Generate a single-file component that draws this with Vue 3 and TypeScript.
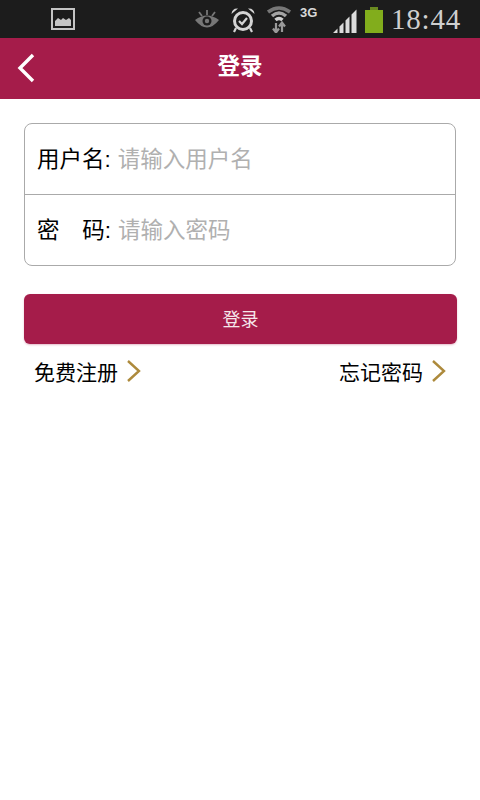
<script setup lang="ts">
</script>

<template>
  <div class="page">
    <div class="status">
      <svg class="pic" width="24" height="22" viewBox="0 0 24 22">
        <rect x="1" y="1" width="22" height="20" fill="none" stroke="#c4c4c4" stroke-width="2"/>
        <path d="M4 18 L4 13 L7 10 L10 12 L12 10 L15 12 L18 10 L20 12 L20 18 Z" fill="#c4c4c4"/>
      </svg>
      <div class="spring"></div>
      <svg class="eye" width="26" height="20" viewBox="0 0 26 20">
        <path d="M1 10 Q13 1 25 10 Q13 25 1 10 Z" fill="#777"/>
        <circle cx="13" cy="11" r="4.500" fill="#1c1c1c"/>
        <circle cx="13" cy="11" r="2.200" fill="#777"/>
        <path d="M13 0 V5 M5 2 L8 6 M21 2 L18 6" stroke="#777" stroke-width="1.800"/>
      </svg>
      <svg class="alarm" width="24" height="26" viewBox="0 0 24 26">
        <circle cx="12" cy="14" r="8.500" fill="none" stroke="#d4d4d4" stroke-width="3"/>
        <path d="M8 14 L11 17 L16 11" fill="none" stroke="#d4d4d4" stroke-width="2.200"/>
        <path d="M0.500 7 Q1 1 7 1.500 Z M23.500 7 Q23 1 17 1.500 Z" fill="#d4d4d4"/>
        <path d="M5 21 L3 25 M19 21 L21 25" stroke="#d4d4d4" stroke-width="2.200"/>
      </svg>
      <svg class="wifi" width="26" height="28" viewBox="0 0 26 28">
        <path d="M2 7 Q13 -1 24 7" fill="none" stroke="#777" stroke-width="3.600"/>
        <path d="M6 11 Q13 5 20 11" fill="none" stroke="#a4a4a4" stroke-width="3.600"/>
        <path d="M9.500 15 Q13 12 16.500 15" fill="none" stroke="#d0d0d0" stroke-width="3.600"/>
        <path d="M10 18 V27 M7 23.500 L10 27.500 L13 23.500" fill="none" stroke="#999" stroke-width="2.200"/>
        <path d="M16 27 V18 M13 21.500 L16 17.500 L19 21.500" fill="none" stroke="#999" stroke-width="2.200"/>
      </svg>
      <span class="net">3G</span>
      <svg class="signal" width="25" height="24" viewBox="0 0 25 24">
        <path d="M0 24 L4.500 19.500 V24 Z M6.500 24 V17.500 L10.500 13.500 V24 Z M12.500 24 V11.500 L16.500 7.500 V24 Z M18.500 24 V5.500 L23.500 0.500 V24 Z" fill="#dcdcdc"/>
      </svg>
      <svg class="battery" width="18" height="26" viewBox="0 0 18 26">
        <rect x="5" y="0" width="8" height="3" fill="#6a8a20"/>
        <rect x="0" y="3" width="18" height="23" fill="#82ad1c"/>
      </svg>
      <span class="time">18:44</span>
    </div>

    <header class="nav">
      <svg class="back" width="20" height="30" viewBox="0 0 20 30">
        <path d="M16 2 L3 15 L16 28" fill="none" stroke="#fff" stroke-width="3.400"/>
      </svg>
      <h1 class="title">登录</h1>
    </header>

    <main class="content">
      <div class="card">
        <div class="row">
          <span class="label">用户名:</span>
          <span class="hint">请输入用户名</span>
        </div>
        <div class="row second">
          <span class="label pw"><span>密</span><span>码:</span></span>
          <span class="hint">请输入密码</span>
        </div>
      </div>

      <button class="submit" type="button">登录</button>

      <div class="links">
        <a class="link">免费注册
          <svg width="16" height="24" viewBox="0 0 16 24"><path d="M2 2 L13 12 L2 22" fill="none" stroke="#ad8a3c" stroke-width="2.400"/></svg>
        </a>
        <a class="link">忘记密码
          <svg width="16" height="24" viewBox="0 0 16 24"><path d="M2 2 L13 12 L2 22" fill="none" stroke="#ad8a3c" stroke-width="2.400"/></svg>
        </a>
      </div>
    </main>
  </div>
</template>

<style>
html, body { margin: 0; background: #fff; }
</style>

<style scoped>
.page {
  width: 480px;
  height: 800px;
  overflow: hidden;
  background: #fff;
  font-family: "Liberation Sans", "Noto Sans CJK SC", sans-serif;
}
.status {
  height: 38px;
  background: #1c1c1c;
  display: flex;
  align-items: center;
  box-sizing: border-box;
  padding: 0 19px 0 51px;
}
.spring { flex: 1; }
.eye { margin-right: 11px; margin-top: 1px; }
.alarm { margin-right: 11px; margin-top: 1px; }
.wifi { margin-right: 8px; margin-top: -1px; }
.net {
  color: #d8d8d8;
  font: 700 13px "Liberation Sans", sans-serif;
  width: 33px;
  margin-top: -14px;
}
.signal { margin-right: 7px; margin-top: 3px; }
.battery { margin-right: 8px; margin-top: 2px; }
.time {
  color: #cfcfcf;
  font: 400 29px "Liberation Serif", serif;
  letter-spacing: 0.800px;
  white-space: nowrap;
}
.nav {
  height: 61px;
  background: #a51c4a;
  display: flex;
  align-items: center;
  justify-content: center;
  position: relative;
}
.back { position: absolute; left: 17px; top: 15px; }
.title {
  margin: -10px 0 0;
  color: #fff;
  font-size: 22.500px;
  font-weight: 700;
}
.content { padding: 24px 24px 0; }
.card {
  border: 1px solid #aaa;
  border-radius: 8px;
  height: 143px;
  box-sizing: border-box;
}
.row {
  height: 70px;
  display: flex;
  align-items: center;
  padding: 0 0 4px 12px;
  font-size: 22.500px;
  box-sizing: border-box;
}
.second { height: 71px; border-top: 1px solid #aaa; }
.label { color: #000; }
.pw { display: flex; justify-content: space-between; width: 74px; }
.hint { color: #b0b0b0; margin-left: 7px; }
.submit {
  display: block;
  width: 433px;
  height: 50px;
  margin-top: 28px;
  padding: 0 0 2px;
  border: 0;
  border-radius: 6px;
  background: #a51c4a;
  color: #f5e6ea;
  font: 400 18px "Liberation Sans", "Noto Sans CJK SC", sans-serif;
  box-shadow: 0 1px 2px rgba(165, 28, 74, 0.3);
}
.links {
  display: flex;
  justify-content: space-between;
  padding: 0 9px 0 10px;
  margin-top: 13px;
}
.link {
  display: flex;
  align-items: center;
  gap: 8px;
  color: #000;
  font-size: 21px;
  height: 28px;
}
</style>
